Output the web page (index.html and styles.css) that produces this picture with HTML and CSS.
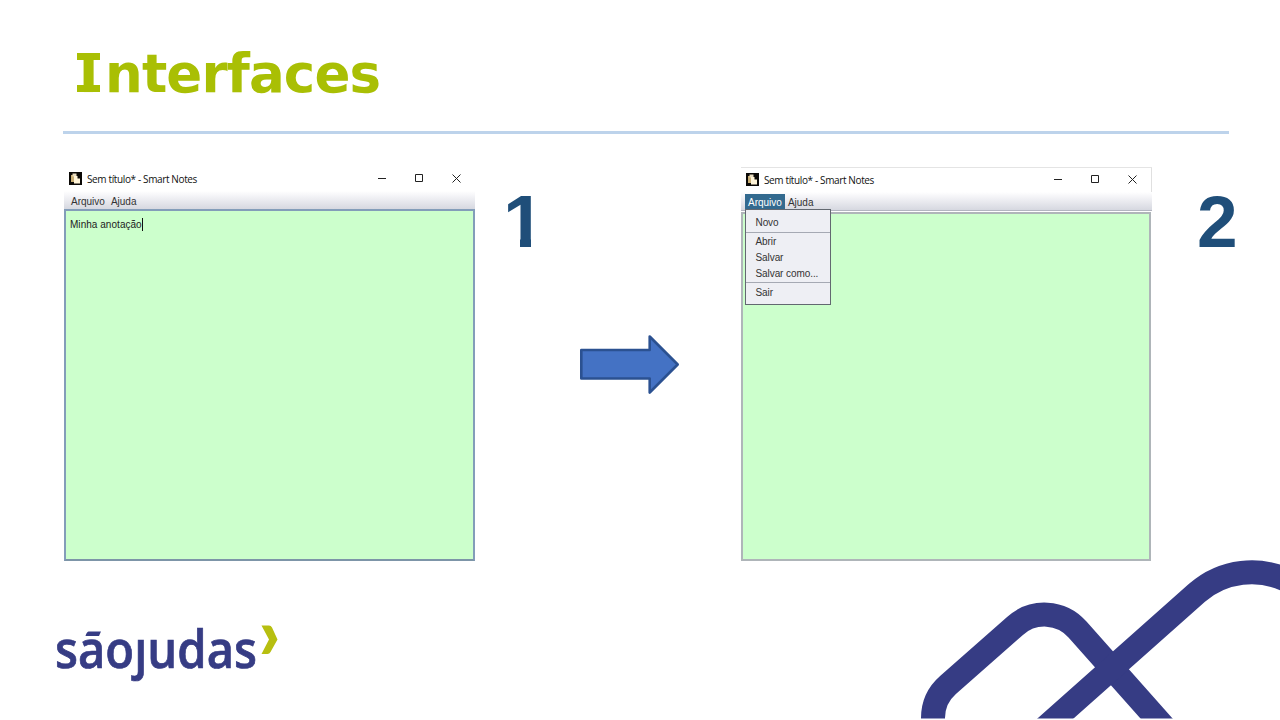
FILE: index.html
```html
<!DOCTYPE html>
<html lang="pt-BR">
<head>
<meta charset="utf-8">
<title>Interfaces</title>
<link rel="stylesheet" href="styles.css">
</head>
<body>
<div class="slide">
  <header class="slide-header">
    <h1 class="title"><span class="title-initial">I</span>nterfaces</h1>
  </header>

  <main class="stage">
    <section class="window window-one">
      <div class="titlebar">
        <svg class="app-icon" width="13" height="13" viewBox="0 0 13 13"><rect width="13" height="13" fill="#0b0906"/><path d="M2 3h3.500v7H2z" fill="#c9ae74"/><path d="M3.500 1.500h4v3h-4z" fill="#e9dcc0"/><path d="M5 4h3.500v2.500H11v5H5z" fill="#fff4d8"/></svg>
        <span class="caption">Sem título* - Smart Notes</span>
        <svg class="controls" width="88" height="12" viewBox="0 0 88 12"><path d="M1 5.500h8M38.500 1.500h7v7h-7zM75.500 1.500l8 8M83.500 1.500l-8 8" fill="none" stroke="#222" stroke-width="1"/></svg>
      </div>
      <nav class="menubar"><span class="menu-name">Arquivo</span><span class="menu-name">Ajuda</span></nav>
      <div class="editor"><span class="note">Minha anotação</span></div>
    </section>

    <div class="number number-one"><span class="digit">1</span></div>

    <svg class="arrow" width="102" height="64" viewBox="0 0 102 64"><path d="M3.300 18h68.400V4.500l28 28-28 28V46.500H3.300z" fill="#4472c4" stroke="#2b5191" stroke-width="2.600" stroke-linejoin="round"/></svg>

    <section class="window window-two">
      <div class="titlebar">
        <svg class="app-icon" width="13" height="13" viewBox="0 0 13 13"><rect width="13" height="13" fill="#0b0906"/><path d="M2 3h3.500v7H2z" fill="#c9ae74"/><path d="M3.500 1.500h4v3h-4z" fill="#e9dcc0"/><path d="M5 4h3.500v2.500H11v5H5z" fill="#fff4d8"/></svg>
        <span class="caption">Sem título* - Smart Notes</span>
        <svg class="controls" width="88" height="12" viewBox="0 0 88 12"><path d="M1 5.500h8M38.500 1.500h7v7h-7zM75.500 1.500l8 8M83.500 1.500l-8 8" fill="none" stroke="#222" stroke-width="1"/></svg>
      </div>
      <nav class="menubar">
        <span class="menu-name menu-open">Arquivo</span><span class="menu-name">Ajuda</span>
        <ul class="dropdown">
          <li class="item item-first">Novo</li>
          <li class="item item-group">Abrir</li>
          <li class="item">Salvar</li>
          <li class="item item-end">Salvar como...</li>
          <li class="item item-last">Sair</li>
        </ul>
      </nav>
      <div class="editor"></div>
    </section>

    <div class="number number-two">2</div>
  </main>

  <footer class="slide-footer">
    <svg class="logo" width="236" height="98" viewBox="50 596 236 98">
      <text class="wordmark" x="55" y="667.500" textLength="202" lengthAdjust="spacingAndGlyphs">sãojudas</text>
      <path d="M80 622h28v15.500H80zM132 622h18v15.500h-18z" fill="#fff"/>
      <path d="M88.500 631.500h12.500l-2 4.500H85.500q1-4 3-4.500z" fill="#363c84"/>
      <path d="M261.500 625.500h7.500q2 0 3 2l5.500 12-7 12.500q-1 2-3 2h-6l7.500-14.500z" fill="#b7bf10"/>
    </svg>
    <svg class="ribbon" width="362" height="164" viewBox="918 556 362 164">
      <g fill="none" stroke="#363c84" stroke-width="24">
        <path d="M933 722V718A44 44 0 0 1 948 685L1015 626A44 44 0 0 1 1077.500 629.500L1167 730.300"/>
        <path d="M1042.500 730L1197 592.800A83 83 0 0 1 1290 581.700"/>
      </g>
      <path d="M918 718.500h362v2H918z" fill="#fff"/>
    </svg>
  </footer>
</div>
</body>
</html>
```
FILE: styles.css
```css
* { box-sizing: border-box; }
body { margin: 0; background: #fff; }
.slide {
  width: 1280px; height: 720px; overflow: hidden; background: #fff;
  display: grid; grid-template-rows: 134px 422px 164px;
}
.slide-header {
  margin: 0 51px 0 63px; padding: 43px 0 0 12px;
  border-bottom: 3px solid #bdd3eb;
}
.title {
  margin: 0; color: #a9bf04; white-space: nowrap;
  font: bold 53px/62px "DejaVu Sans", sans-serif; letter-spacing: -.85px;
}
.title-initial {
  display: inline-block; width: 30px; text-align: center; letter-spacing: 0;
  background:
    linear-gradient(#a9bf04, #a9bf04) 2px 10px / 23px 7px no-repeat,
    linear-gradient(#a9bf04, #a9bf04) 2px 42px / 23px 7px no-repeat;
  padding-right: 3px;
}
.stage {
  display: grid; align-items: start;
  grid-template-columns: 411px 103px 102px 61px 411px 1fr;
  padding: 33px 0 0 64px;
}
.window { width: 411px; background: #fff; color: #333; }
.window-one { grid-column: 1; }
.window-two {
  grid-column: 5; height: 395px;
  border-top: 1px solid #e4e4e4;
}
.titlebar { display: flex; align-items: center; height: 24px; padding: 0 10px 0 5px; }
.window-two .titlebar { border-right: 1px solid #e0e0e0; }
.app-icon { margin: 0 5px 1px 0; }
.caption {
  flex: 1; color: #111; white-space: nowrap;
  font: 10px/14px "Open Sans", "Noto Sans", sans-serif; letter-spacing: -.37px;
}
.menubar {
  display: flex; position: relative; height: 18px; padding: 2px 3px 0 4px;
  background: linear-gradient(#fff, #f5f5f8 25%, #d6d8e0);
  font: 10px/17px "Liberation Sans", Arial, sans-serif;
}
.menu-name { height: 16px; padding: 0 3px; }
.window-one .editor {
  height: 352px; padding: 7px 4px; background: #cfc;
  border: 2px solid #839db9; border-bottom-color: #7d95a8;
  display: flex; align-items: flex-start;
}
.note {
  height: 13px; border-right: 1px solid #111; color: #1c1c1c;
  font: 10px/13px "Liberation Sans", Arial, sans-serif; letter-spacing: .04px;
}
.window-two .menubar { border-bottom: 1px solid #b3b5c1; height: 19px; }
.window-two .editor {
  height: 349px; width: 410px; margin-top: 1px; background: #cfc;
  border: 2px solid #afb5b9;
}
.menu-open { background: #336a8f; color: #fff; }
.dropdown {
  position: absolute; left: 4px; top: 17px; width: 86px; height: 96px;
  margin: 0; padding: 4px 0 0; list-style: none;
  background: #eeeff4; border: 1px solid #626870;
}
.item { height: 15.5px; padding-left: 9.5px; line-height: 17px; white-space: nowrap; letter-spacing: -.08px; }
.item-first { height: 18.5px; border-bottom: 1px solid #a5a9b3; }
.item-group { height: 16.5px; padding-top: .5px; }
.item-end { height: 18px; border-bottom: 1px solid #a5a9b3; }
.item-last { padding-top: 1px; }
.number { color: #1f4e79; font: bold 73px/84px "Liberation Sans", Arial, sans-serif; }
.number-one { padding: 12px 0 0 28px; font-size: 75px; }
.digit { display: inline-block; position: relative; }
/* trims the foot of the numeral on both sides of its stem */
.digit::before, .digit::after {
  content: ""; position: absolute; top: 58px; height: 12px; background: #fff;
}
.digit::before { left: 0; width: 17px; }
.digit::after { left: 28px; width: 16px; }
.number-two { padding: 13px 0 0 45px; }
.arrow { margin-top: 165px; }
.slide-footer { display: flex; justify-content: space-between; align-items: flex-start; }
.logo { margin: 40px 0 0 50px; }
.wordmark {
  fill: #363c84; stroke: #363c84; stroke-width: .7;
  font: 600 52px "Open Sans", "Noto Sans", sans-serif;
}
```
